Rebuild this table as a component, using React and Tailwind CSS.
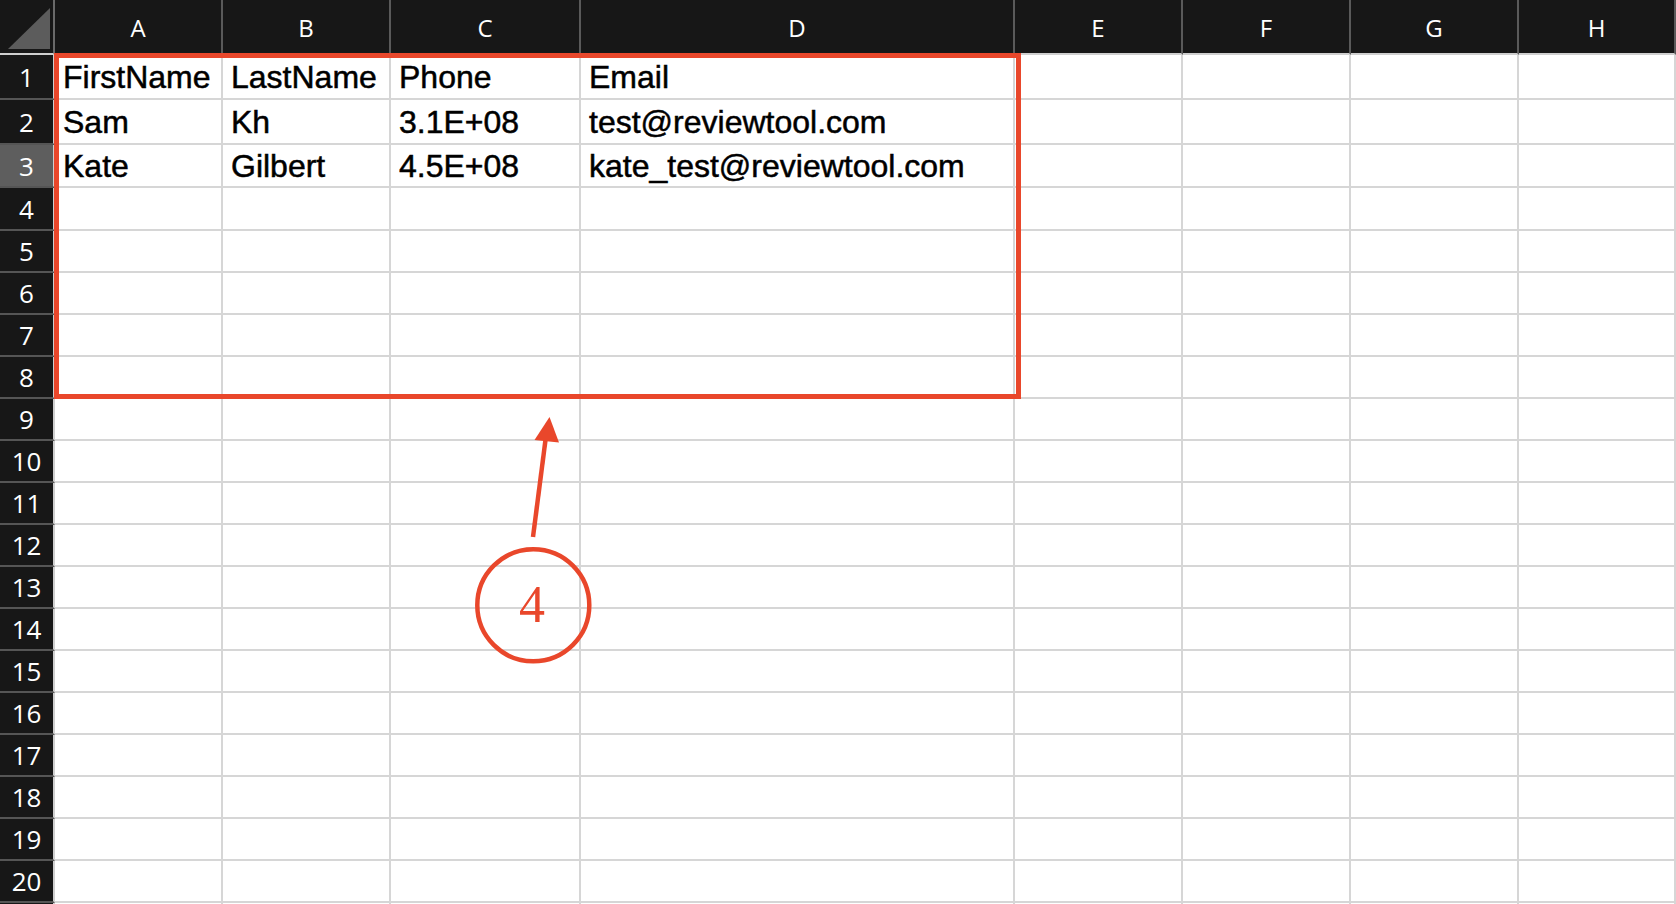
import React from 'react';

const COLUMNS = ['A', 'B', 'C', 'D', 'E', 'F', 'G', 'H'];

const DATA = {
    1: ['FirstName', 'LastName', 'Phone', 'Email'],
    2: ['Sam', 'Kh', '3.1E+08', 'test@reviewtool.com'],
    3: ['Kate', 'Gilbert', '4.5E+08', 'kate_test@reviewtool.com'],
};

// row 21 only peeks in at the bottom edge, so it gets no label
const ROWS = Array.from({ length: 21 }, (_, i) => i + 1);

const headFont = { fontFamily: '"Open Sans", "DejaVu Sans", sans-serif' };
const cellFont = { fontFamily: '"Liberation Sans", Arial, sans-serif' };

const RED = '#e9472b';

const Annotation = () => (
    <svg
        className="absolute left-0 top-0 pointer-events-none"
        width="1676"
        height="904"
        viewBox="0 0 1676 904"
    >
        <line x1="533" y1="537" x2="546" y2="436" stroke={RED} strokeWidth="4.5" />
        <polygon points="549.5,417 534.5,440 559,442.5" fill={RED} />
        <circle cx="533.3" cy="605.3" r="56" fill="none" stroke={RED} strokeWidth="4.5" />
        <text
            x="532"
            y="622"
            textAnchor="middle"
            fontSize="52"
            fill={RED}
            style={{ fontFamily: '"Liberation Serif", "Times New Roman", serif' }}
        >
            4
        </text>
    </svg>
);

export default function App() {
    return (
        <div className="relative w-[1676px] h-[904px] overflow-hidden bg-white">
            <div className="grid grid-cols-[55px_168px_168px_190px_434px_168px_168px_168px_1fr] grid-rows-[55px_45px_45px_43px_43px_repeat(17,42px)]">
                {/* corner */}
                <div className="relative bg-[#171717] border-r-2 border-b-2 border-r-[#6a6a6a] border-b-[#cfcfcf]">
                    <svg className="absolute left-0 top-0" width="53" height="53" viewBox="0 0 53 53">
                        <polygon points="8,49 50,49 50,8" fill="#5c5c5c" />
                    </svg>
                </div>
                {COLUMNS.map(col => (
                    <div
                        key={col}
                        style={headFont}
                        className="flex items-center justify-center pt-[3px] bg-[#171717] border-r-2 border-b-2 border-r-[#5a5a5a] border-b-[#cfcfcf] text-white text-[24px] font-medium leading-[32px]"
                    >
                        {col}
                    </div>
                ))}

                {ROWS.map(row => (
                    <React.Fragment key={row}>
                        <div
                            style={headFont}
                            className={`flex items-center justify-center border-r-2 border-b-2 border-r-[#cfcfcf] border-b-[#555555] text-white text-[26px] font-medium leading-[36px] ${row === 3 ? 'bg-[#5e5e5e]' : 'bg-[#171717]'}`}
                        >
                            {row <= 20 ? row : null}
                        </div>
                        {COLUMNS.map((col, i) => (
                            <div
                                key={col}
                                style={cellFont}
                                className="flex items-center pl-2 border-r-2 border-b-2 border-[#d6d6d6] text-black text-[32px] leading-[36px] whitespace-nowrap overflow-hidden [-webkit-text-stroke:0.5px_black]"
                            >
                                {DATA[row] ? DATA[row][i] : null}
                            </div>
                        ))}
                    </React.Fragment>
                ))}
            </div>

            {/* selection box */}
            <div className="absolute left-[54px] top-[53px] w-[967px] h-[346px] border-[5px] border-[#e9472b] pointer-events-none" />

            <Annotation />
        </div>
    );
}
